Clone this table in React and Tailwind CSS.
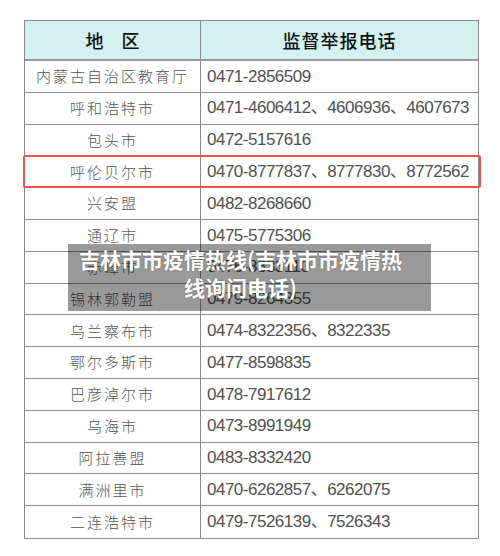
const rows = [
  ["内蒙古自治区教育厅", "0471-2856509"],
  ["呼和浩特市", "0471-4606412、4606936、4607673"],
  ["包头市", "0472-5157616"],
  ["呼伦贝尔市", "0470-8777837、8777830、8772562"],
  ["兴安盟", "0482-8268660"],
  ["通辽市", "0475-5775306"],
  ["赤峰市", "0476-8333110"],
  ["锡林郭勒盟", "0479-8264355"],
  ["乌兰察布市", "0474-8322356、8322335"],
  ["鄂尔多斯市", "0477-8598835"],
  ["巴彦淖尔市", "0478-7917612"],
  ["乌海市", "0473-8991949"],
  ["阿拉善盟", "0483-8332420"],
  ["满洲里市", "0470-6262857、6262075"],
  ["二连浩特市", "0479-7526139、7526343"],
];

export default function App() {
  return (
    <div className="relative w-[500px] h-[556px] bg-white overflow-hidden font-['Noto_Sans_CJK_SC',sans-serif]">
      <div className="pt-[20px] pl-[24px]">
        {/* Table */}
        <div className="w-[455px] border border-[#8a8a8a]">
          {/* Header */}
          <div className="flex h-[40px] bg-[#d4f1ef] border-b-2 border-[#9a9a9a]">
            <div className="w-[176px] border-r border-[#8a8a8a] flex items-center justify-center text-[18px] font-medium text-[#111]">
              地　区
            </div>
            <div className="flex-1 flex items-center justify-center text-[18px] font-medium tracking-[1px] text-[#111]">
              监督举报电话
            </div>
          </div>

          {rows.map(([area, phone], i) => (
            <div
              key={area}
              className={
                "relative flex h-[31.8px] " +
                (i < rows.length - 1 ? "border-b border-[#8a8a8a]" : "")
              }
            >
              <div className="w-[176px] border-r border-[#8a8a8a] flex items-center justify-center text-[15px] font-light tracking-[2px] text-[#555]">
                {area}
              </div>
              <div className="flex-1 flex items-center pl-[6px] text-[17px] tracking-[-0.5px] text-[#505050] font-['Liberation_Sans','Noto_Sans_CJK_SC',sans-serif]">
                {phone}
              </div>
              {i === 3 && (
                <div className="absolute -left-[2px] -right-[3px] -top-[1px] -bottom-[1px] border-2 border-[#f24f4f] rounded-[2px]" />
              )}
            </div>
          ))}
        </div>
      </div>

      {/* Caption overlay */}
      <div className="absolute left-[68px] top-[244px] w-[363px] h-[67px] bg-black/40 pt-[1px] pl-[6px] pr-[24px] text-center text-white text-[21px] font-bold leading-[28px] [text-shadow:0_0_2px_rgba(0,0,0,0.35)]">
        吉林市市疫情热线(吉林市市疫情热
        <br />
        线询问电话)
      </div>
    </div>
  );
}
